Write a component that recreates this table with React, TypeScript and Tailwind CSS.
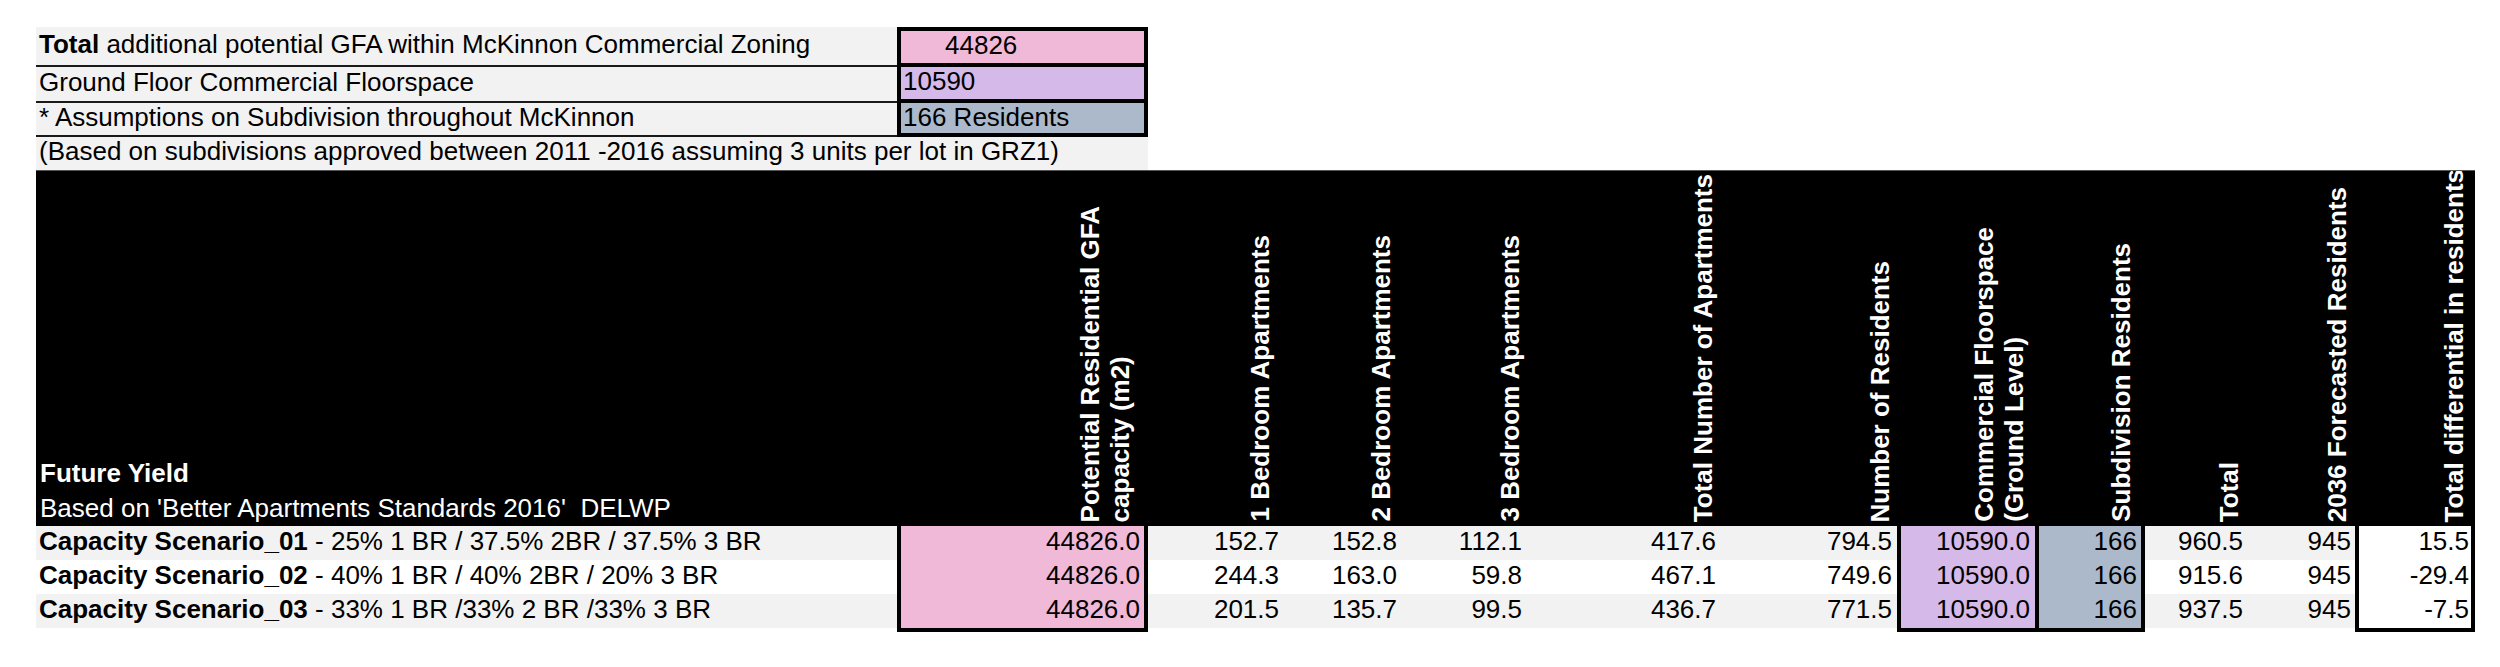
import clsx from 'clsx'

interface Col {
  w: string
  head: string[]
  hpr: string
  box?: string
  pad?: string
}

const COLS: Col[] = [
  { w: 'w-[251px]', head: ['Potential Residential GFA', 'capacity (m2)'], hpr: 'pr-[13px]', box: 'border-x-4 border-black bg-[#f0b9d7] pr-[4px]' },
  { w: 'w-[136px]', head: ['1 Bedroom Apartments'], hpr: 'pr-[9px]', pad: 'pr-[5px]' },
  { w: 'w-[118px]', head: ['2 Bedroom Apartments'], hpr: 'pr-[6px]', pad: 'pr-[5px]' },
  { w: 'w-[125px]', head: ['3 Bedroom Apartments'], hpr: 'pr-[2px]', pad: 'pr-[5px]' },
  { w: 'w-[194px]', head: ['Total Number of Apartments'], hpr: 'pr-[3px]', pad: 'pr-[5px]' },
  { w: 'w-[176px]', head: ['Number of Residents'], hpr: 'pr-[2px]', pad: 'pr-[5px]' },
  { w: 'w-[142px]', head: ['Commercial Floorspace', '(Ground Level)'], hpr: 'pr-[10px]', box: 'border-x-4 border-black bg-[#d5b9e8] pr-[5px]' },
  { w: 'w-[106px]', head: ['Subdivision Residents'], hpr: 'pr-[9px]', box: 'border-r-4 border-black bg-[#acb9ca] pr-[4px]' },
  { w: 'w-[103px]', head: ['Total'], hpr: 'pr-[4px]', pad: 'pr-[5px]' },
  { w: 'w-[107px]', head: ['2036 Forecasted Residents'], hpr: 'pr-[3px]', pad: 'pr-[4px]' },
  { w: 'w-[120px]', head: ['Total differential in residents'], hpr: 'pr-[6px]', box: 'border-x-4 border-black bg-white pr-[2px]' },
]

const ROWS = [
  {
    name: 'Capacity Scenario_01',
    desc: ' - 25% 1 BR / 37.5% 2BR / 37.5% 3 BR',
    values: ['44826.0', '152.7', '152.8', '112.1', '417.6', '794.5', '10590.0', '166', '960.5', '945', '15.5'],
  },
  {
    name: 'Capacity Scenario_02',
    desc: ' - 40% 1 BR / 40% 2BR / 20% 3 BR',
    values: ['44826.0', '244.3', '163.0', '59.8', '467.1', '749.6', '10590.0', '166', '915.6', '945', '-29.4'],
  },
  {
    name: 'Capacity Scenario_03',
    desc: ' - 33% 1 BR /33% 2 BR /33% 3 BR',
    values: ['44826.0', '201.5', '135.7', '99.5', '436.7', '771.5', '10590.0', '166', '937.5', '945', '-7.5'],
  },
]

export default function App() {
  return (
    <div className="w-[2500px] h-[667px] bg-white pt-[27px] pl-[36px] text-black text-[26px] font-['Liberation_Sans',Arial,sans-serif] overflow-hidden">
      {/* Summary block */}
      <div className="flex h-[40px]">
        <div className="w-[861px] bg-[#f2f2f2] border-b-2 border-[#1a1a1a] pl-[3px] pt-[2px] leading-[30px] whitespace-nowrap">
          <b>Total</b> additional potential GFA within McKinnon Commercial Zoning
        </div>
        <div className="w-[251px] border-4 border-black bg-[#f0b9d7] pl-[44px] leading-[28px]">44826</div>
      </div>
      <div className="flex h-[36px]">
        <div className="w-[861px] bg-[#f2f2f2] border-b-2 border-[#1a1a1a] pl-[3px] leading-[30px] whitespace-nowrap">
          Ground Floor Commercial Floorspace
        </div>
        <div className="w-[251px] border-x-4 border-b-4 border-black bg-[#d5b9e8] pl-[2px] leading-[28px]">10590</div>
      </div>
      <div className="flex h-[34px]">
        <div className="w-[861px] bg-[#f2f2f2] border-b-2 border-[#1a1a1a] pl-[3px] leading-[28px] whitespace-nowrap">
          * Assumptions on Subdivision throughout McKinnon
        </div>
        <div className="w-[251px] border-x-4 border-b-4 border-black bg-[#acb9ca] pl-[2px] leading-[28px]">166 Residents</div>
      </div>
      <div className="w-[1112px] h-[33px] bg-[#f2f2f2] pl-[3px] leading-[28px] whitespace-nowrap">
        (Based on subdivisions approved between 2011 -2016 assuming 3 units per lot in GRZ1)
      </div>

      {/* Header */}
      <div className="flex w-[2439px] h-[356px] bg-black border-t border-[#555] text-white">
        <div className="w-[861px] flex flex-col justify-end pl-[4px] leading-[35px] whitespace-pre">
          <div className="font-bold">Future Yield</div>
          <div>Based on 'Better Apartments Standards 2016'  DELWP</div>
        </div>
        {COLS.map((c, i) => (
          <div key={i} className={clsx(c.w, c.hpr, 'h-full flex justify-end items-end pb-[4px] overflow-hidden')}>
            <div className="[writing-mode:vertical-rl] rotate-180 font-bold leading-[30px] whitespace-nowrap">
              {c.head.map((line, j) => (
                <div key={j}>{line}</div>
              ))}
            </div>
          </div>
        ))}
      </div>

      {/* Scenario rows */}
      {ROWS.map((r, ri) => {
        const last = ri === ROWS.length - 1
        const bg = ri === 1 ? 'bg-white' : 'bg-[#f2f2f2]'
        return (
          <div key={ri} className="flex items-start leading-[30px]">
            <div className={clsx('w-[861px] h-[34px] pl-[3px] whitespace-nowrap', bg)}>
              <b>{r.name}</b>
              {r.desc}
            </div>
            {COLS.map((c, ci) => (
              <div
                key={ci}
                className={clsx(
                  c.w,
                  'text-right whitespace-nowrap',
                  c.box ? c.box : [c.pad, bg],
                  c.box && last ? 'h-[38px] border-b-4' : 'h-[34px]'
                )}
              >
                {r.values[ci]}
              </div>
            ))}
          </div>
        )
      })}
    </div>
  )
}
